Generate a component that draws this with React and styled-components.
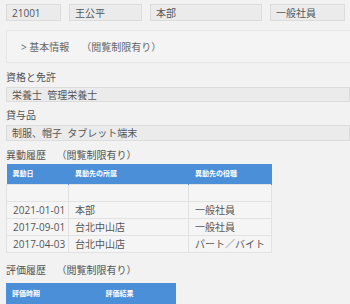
import React from "react";
import styled, { createGlobalStyle } from "styled-components";

const Global = createGlobalStyle`
  html, body { margin: 0; padding: 0; background: #f2f2f2; }
  body { font-family: "Open Sans", "Noto Sans CJK JP", sans-serif; color: #555; overflow: hidden; }
`;

const Page = styled.div`
  width: 350px;
  height: 304px;
  padding: 4px 0 0 6px;
  box-sizing: border-box;
  overflow: hidden;
  display: flex;
  flex-direction: column;
  & > * { flex-shrink: 0; }
`;

const TopRow = styled.div`
  display: flex;
  gap: 8px;
`;

const Field = styled.div`
  box-sizing: border-box;
  width: ${(p) => p.$w || "auto"};
  flex: ${(p) => (p.$w ? "none" : "1")};
  height: ${(p) => p.$h || "17px"};
  background: #ebebeb;
  border: 1px solid #dcdcdc;
  padding: 0 5px;
  display: flex;
  align-items: center;
  font-size: 10px;
  line-height: 12px;
  color: #555;
  white-space: nowrap;
`;

const Section = styled.div`
  margin-top: 9px;
  height: 33px;
  box-sizing: border-box;
  border-top: 1px solid #e6e6e6;
  border-bottom: 1px solid #e6e6e6;
  border-left: 1px solid #e6e6e6;
  background: #f4f4f4;
  display: flex;
  align-items: center;
  padding-left: 14px;
  font-size: 10px;
  color: #666;
  gap: 12px;
`;

const Label = styled.div`
  font-size: 10px;
  color: #555;
  margin-top: ${(p) => p.$mt};
  margin-bottom: ${(p) => p.$mb};
  height: 13px;
  line-height: 13px;
  white-space: nowrap;
`;

const Table = styled.table`
  border-collapse: collapse;
  table-layout: fixed;
  width: ${(p) => p.$w};
  background: #f5f5f5;
`;

const Th = styled.th`
  box-sizing: border-box;
  background: #4a8fd8;
  color: #fff;
  font-size: 7px;
  line-height: 9px;
  font-weight: bold;
  text-align: left;
  height: 21px;
  padding: 0 6px;
  border-right: 1px solid #4a8fd8;
  width: ${(p) => p.$w};
`;

const Td = styled.td`
  box-sizing: border-box;
  height: 17px;
  padding: 0 6px;
  font-size: 10px;
  line-height: 12px;
  color: #555;
  border: 1px solid #e2e2e2;
  white-space: nowrap;
`;

const rows = [
  ["2021-01-01", "本部", "一般社員"],
  ["2017-09-01", "台北中山店", "一般社員"],
  ["2017-04-03", "台北中山店", "パート／バイト"],
];

export default function App() {
  return (
    <>
      <Global />
      <Page>
        <TopRow>
          <Field $w="55px">21001</Field>
          <Field $w="73px">王公平</Field>
          <Field $w="112px">本部</Field>
          <Field $w="75px">一般社員</Field>
        </TopRow>
        <Section>
          <span>&gt; 基本情報</span>
          <span>（閲覧制限有り）</span>
        </Section>
        <Label $mt="8px" $mb="3px">資格と免許</Label>
        <Field>栄養士&nbsp;&nbsp;管理栄養士</Field>
        <Label $mt="7px" $mb="3px">貸与品</Label>
        <Field>制服、帽子&nbsp;&nbsp;タブレット端末</Field>
        <Label $mt="8px" $mb="2px">異動履歴&nbsp;&nbsp;&nbsp;&nbsp;（閲覧制限有り）</Label>
        <Table $w="266px">
          <thead>
            <tr>
              <Th $w="62px">異動日</Th>
              <Th $w="120px">異動先の所属</Th>
              <Th>異動先の役職</Th>
            </tr>
          </thead>
          <tbody>
            <tr>
              <Td />
              <Td />
              <Td />
            </tr>
            {rows.map((r) => (
              <tr key={r[0]}>
                <Td>{r[0]}</Td>
                <Td>{r[1]}</Td>
                <Td>{r[2]}</Td>
              </tr>
            ))}
          </tbody>
        </Table>
        <Label $mt="11px" $mb="6px">評価履歴&nbsp;&nbsp;&nbsp;&nbsp;（閲覧制限有り）</Label>
        <Table $w="170px">
          <thead>
            <tr>
              <Th $w="93px">評価時期</Th>
              <Th>評価結果</Th>
            </tr>
          </thead>
        </Table>
      </Page>
    </>
  );
}
